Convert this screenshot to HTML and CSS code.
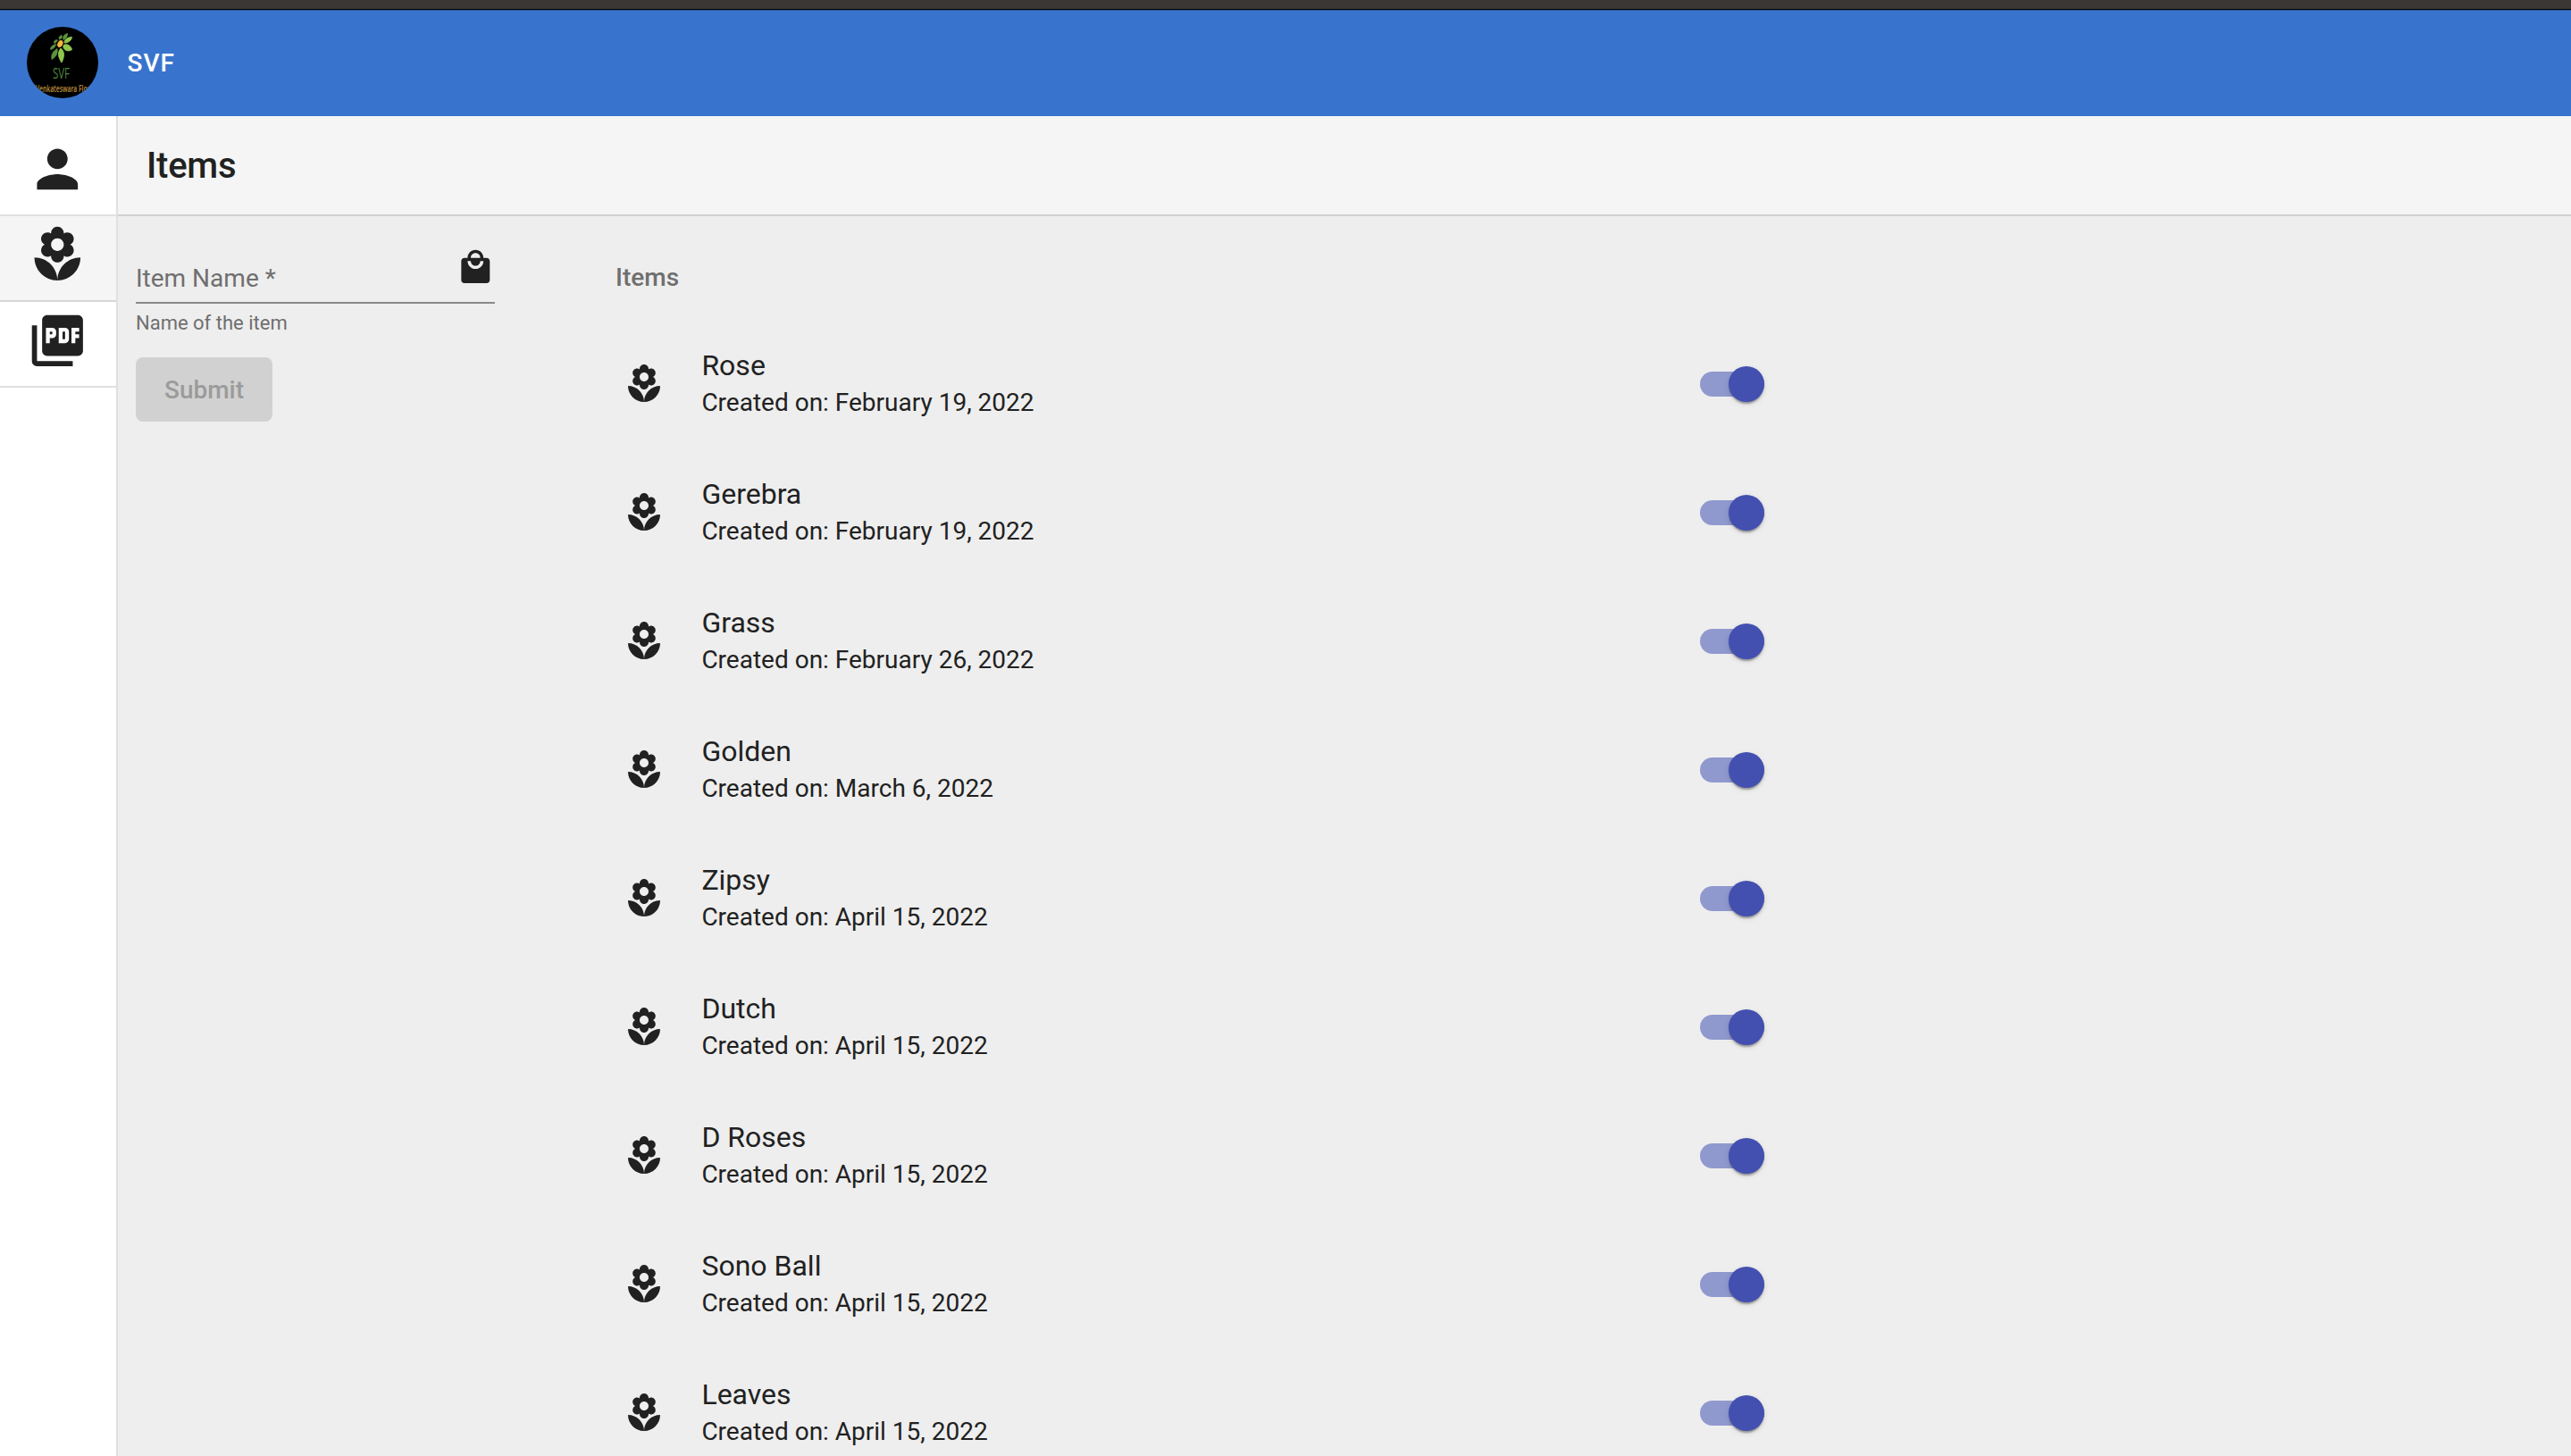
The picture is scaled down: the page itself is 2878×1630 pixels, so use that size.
FILE: index.html
```
<!DOCTYPE html>
<html lang="en">
<head>
<meta charset="utf-8">
<title>SVF</title>
<link rel="stylesheet" href="styles.css">
</head>
<body>
<svg class="defs" width="0" height="0" aria-hidden="true">
  <symbol id="florist" viewBox="0 0 24 24"><path d="M12 22c4.97 0 9-4.03 9-9-4.97 0-9 4.03-9 9zM5.6 10.25c0 1.38 1.12 2.5 2.5 2.5.53 0 1.01-.16 1.42-.44l-.02.19c0 1.38 1.12 2.5 2.5 2.5s2.5-1.12 2.5-2.5l-.02-.19c.4.28.89.44 1.42.44 1.38 0 2.5-1.12 2.5-2.5 0-1-.59-1.85-1.43-2.25.84-.4 1.43-1.25 1.43-2.25 0-1.38-1.12-2.5-2.5-2.5-.53 0-1.01.16-1.42.44l.02-.19C14.5 2.12 13.38 1 12 1S9.5 2.12 9.5 3.5l.02.19c-.4-.28-.89-.44-1.42-.44-1.38 0-2.5 1.12-2.5 2.5 0 1 .59 1.85 1.43 2.25-.84.4-1.43 1.25-1.43 2.25zM12 5.5c1.38 0 2.5 1.12 2.5 2.5s-1.12 2.5-2.5 2.5S9.5 9.38 9.5 8s1.12-2.5 2.5-2.5zM3 13c0 4.97 4.03 9 9 9 0-4.97-4.03-9-9-9z"/></symbol>
</svg>
<div class="window-edge"></div>
<header class="topbar">
  <svg class="logo" viewBox="0 0 80 80">
    <defs><clipPath id="disc"><circle cx="40" cy="40" r="40"/></clipPath></defs>
    <g clip-path="url(#disc)">
      <rect width="80" height="80"/>
      <g fill="#8fc74e" stroke="#8fc74e" stroke-width=".9">
        <path d="M50.500 11.500c-5 0-9 3-8.500 6.500 5 0 8-3 8.500-6.500z"/>
        <path d="M40.500 20.500c5-2 9 1 10 5-4 3-10 1-10-5z"/>
        <path d="M38 24c5 4 4 10 1 16-4-6-5-11-1-16z"/>
      </g>
      <g fill="#5a9440" stroke="#5a9440" stroke-width=".8">
        <path d="M34 24.500c1 5-1 9-6 12-1-5 1-9 6-12z"/>
        <path d="M32.500 19.500c-1 4-3 5-6 6 0-3 2-5 6-6z"/>
        <path d="M34.500 15c-2 3-3 4-4 3 0-3 2-4 4-3z"/>
        <path d="M39 9.500c1 2 0 4-2.500 5-1-3 0-4 2.500-5z"/>
        <path d="M45.500 7.500c0 4-2 6-4.500 7-1-4 1-6 4.500-7z"/>
      </g>
      <ellipse cx="37.400" cy="19" rx="3.400" ry="4.600" transform="rotate(25 37.4 19)" fill="#f5b63a" stroke="#000"/>
      <text class="logo-name" x="29" y="58" textLength="19" lengthAdjust="spacingAndGlyphs">SVF</text>
      <text class="logo-caption" x="10" y="73" textLength="63" lengthAdjust="spacingAndGlyphs">Venkateswara Flow</text>
    </g>
  </svg>
  <span class="brand">SVF</span>
</header>
<div class="shell">
  <nav class="sidebar">
    <a class="nav-item first"><svg class="nav-icon" viewBox="0 0 24 24"><path d="M12 12c2.21 0 4-1.79 4-4s-1.79-4-4-4-4 1.79-4 4 1.79 4 4 4zm0 2c-2.67 0-8 1.34-8 4v2h16v-2c0-2.66-5.33-4-8-4z"/></svg></a>
    <a class="nav-item active"><svg class="nav-icon"><use href="#florist"/></svg></a>
    <a class="nav-item"><svg class="nav-icon" viewBox="0 0 24 24"><path d="M20 2H8c-1.1 0-2 .9-2 2v12c0 1.1.9 2 2 2h12c1.1 0 2-.9 2-2V4c0-1.1-.9-2-2-2zm-8.500 7.500c0 .83-.67 1.500-1.500 1.500H9v2H7.500V7H10c.83 0 1.500.67 1.500 1.500v1zm5 2c0 .83-.67 1.500-1.500 1.500h-2.500V7H15c.83 0 1.500.67 1.500 1.500v3zm4-3H19v1h1.500V11H19v2h-1.500V7h3v1.500zM9 9.500h1v-1H9v1zM4 6H2v14c0 1.100.9 2 2 2h14v-2H4V6zm10 5.500h1v-3h-1v3z"/></svg></a>
  </nav>
  <main class="content">
    <h1 class="page-title">Items</h1>
    <div class="columns">
      <form class="item-form">
        <div class="field">
          <label class="field-label">Item Name *</label>
          <svg class="bag" viewBox="0 0 24 24"><path d="M19 6h-2c0-2.760-2.240-5-5-5S7 3.240 7 6H5c-1.100 0-1.990.9-1.990 2L3 20c0 1.100.9 2 2 2h14c1.100 0 2-.9 2-2V8c0-1.100-.9-2-2-2zm-7-3c1.660 0 3 1.340 3 3H9c0-1.660 1.340-3 3-3zm0 10c-2.760 0-5-2.240-5-5h2c0 1.660 1.340 3 3 3s3-1.340 3-3h2c0 2.760-2.240 5-5 5z"/></svg>
        </div>
        <div class="hint">Name of the item</div>
        <button class="submit" type="button" disabled>Submit</button>
      </form>
      <section class="list">
        <h2 class="list-title">Items</h2>
        <div class="row"><svg class="row-icon"><use href="#florist"/></svg><div class="row-text"><div class="name">Rose</div><div class="date">Created on: February 19, 2022</div></div><span class="switch"><i class="thumb"></i></span></div>
        <div class="row"><svg class="row-icon"><use href="#florist"/></svg><div class="row-text"><div class="name">Gerebra</div><div class="date">Created on: February 19, 2022</div></div><span class="switch"><i class="thumb"></i></span></div>
        <div class="row"><svg class="row-icon"><use href="#florist"/></svg><div class="row-text"><div class="name">Grass</div><div class="date">Created on: February 26, 2022</div></div><span class="switch"><i class="thumb"></i></span></div>
        <div class="row"><svg class="row-icon"><use href="#florist"/></svg><div class="row-text"><div class="name">Golden</div><div class="date">Created on: March 6, 2022</div></div><span class="switch"><i class="thumb"></i></span></div>
        <div class="row"><svg class="row-icon"><use href="#florist"/></svg><div class="row-text"><div class="name">Zipsy</div><div class="date">Created on: April 15, 2022</div></div><span class="switch"><i class="thumb"></i></span></div>
        <div class="row"><svg class="row-icon"><use href="#florist"/></svg><div class="row-text"><div class="name">Dutch</div><div class="date">Created on: April 15, 2022</div></div><span class="switch"><i class="thumb"></i></span></div>
        <div class="row"><svg class="row-icon"><use href="#florist"/></svg><div class="row-text"><div class="name">D Roses</div><div class="date">Created on: April 15, 2022</div></div><span class="switch"><i class="thumb"></i></span></div>
        <div class="row"><svg class="row-icon"><use href="#florist"/></svg><div class="row-text"><div class="name">Sono Ball</div><div class="date">Created on: April 15, 2022</div></div><span class="switch"><i class="thumb"></i></span></div>
        <div class="row"><svg class="row-icon"><use href="#florist"/></svg><div class="row-text"><div class="name">Leaves</div><div class="date">Created on: April 15, 2022</div></div><span class="switch"><i class="thumb"></i></span></div>
      </section>
    </div>
  </main>
</div>
</body>
</html>
```
FILE: styles.css
```
* { box-sizing: border-box; }

body {
  margin: 0;
  height: 100vh;
  overflow: hidden;
  display: flex;
  flex-direction: column;
  background: #eee;
  color: #212121;
  font: 400 28px/40px Roboto, sans-serif;
}

svg { display: block; fill: #212121; flex: none; }
.defs { display: none; }

.window-edge {
  flex: none;
  height: 11px;
  background: #3b3734;
  border-bottom: 1px solid #000;
}

.topbar {
  flex: none;
  height: 119px;
  padding: 0 30px;
  display: flex;
  align-items: center;
  gap: 32.500px;
  background: #3874cd;
  border-top: 1px solid #2b5899;
}
.logo { width: 80px; height: 80px; margin-bottom: 2px; fill: #000; }
.logo-name { font: 400 16px "Open Sans", sans-serif; fill: #4c8a3e; }
.logo-caption { font: 600 11px "Noto Sans", sans-serif; fill: #b08536; }
.brand { color: #fff; font-weight: 500; letter-spacing: 1px; }

.shell { flex: 1; min-height: 0; display: flex; }

.sidebar {
  flex: none;
  width: 132px;
  background: #fff;
  border-right: 2px solid #e0e0e0;
}
.nav-item {
  display: flex;
  height: 96px;
  padding: 9px 0 0 29.700px;
  border-bottom: 2px solid #e0e0e0;
}
.nav-item.first { height: 112px; padding-top: 24.700px; }
.nav-item.active { background: #f5f5f5; border-bottom-color: #d6d6d6; }
.nav-icon { width: 68.600px; height: 68.600px; }

.content { flex: 1; min-width: 0; }
.page-title {
  margin: 0;
  height: 112px;
  padding: 1px 32px 0;
  background: #f5f5f5;
  border-bottom: 2px solid #d0d0d0;
  font-size: 40px;
  line-height: 110px;
  font-weight: 500;
  letter-spacing: -.25px;
}

.columns { display: flex; padding-left: 20px; }
.item-form { width: 402px; padding-top: 26px; }
.field {
  height: 72px;
  display: flex;
  justify-content: space-between;
  border-bottom: 2px solid #898989;
}
.field-label { padding-top: 24px; color: #6f6f6f; }
.bag { width: 42.600px; height: 42.600px; margin-top: 9.800px; }
.hint { padding-top: 2px; font-size: 22px; color: #6f6f6f; }
.submit {
  display: block;
  width: 153px;
  height: 72px;
  margin-top: 18px;
  padding: 2px 0 0;
  border: 0;
  border-radius: 8px;
  background: #d1d1d1;
  color: #9b9b9b;
  font: 500 28px/70px Roboto, sans-serif;
}

.list { width: 1286px; margin-left: 135px; padding-top: 20px; }
.list-title {
  margin: 0;
  height: 96px;
  padding-top: 1px;
  font-size: 28px;
  line-height: 96px;
  font-weight: 500;
  color: #6f6f6f;
}
.row {
  height: 144px;
  padding-left: 8px;
  display: flex;
  align-items: center;
}
.row-icon { width: 48px; height: 48px; }
.row-text { flex: 1; margin-left: 40.400px; }
.name { font-size: 32px; line-height: 40px; padding-bottom: 2px; }
.date { line-height: 40px; }

.switch {
  width: 72px;
  height: 28px;
  border-radius: 14px;
  background: #9099ce;
  display: flex;
  align-items: center;
  justify-content: flex-end;
}
.thumb {
  width: 40px;
  height: 40px;
  flex: none;
  border-radius: 50%;
  background: #4350b0;
  box-shadow: 0 4px 2px -2px rgba(0,0,0,.2), 0 2px 2px rgba(0,0,0,.14), 0 2px 6px rgba(0,0,0,.12);
}
```
